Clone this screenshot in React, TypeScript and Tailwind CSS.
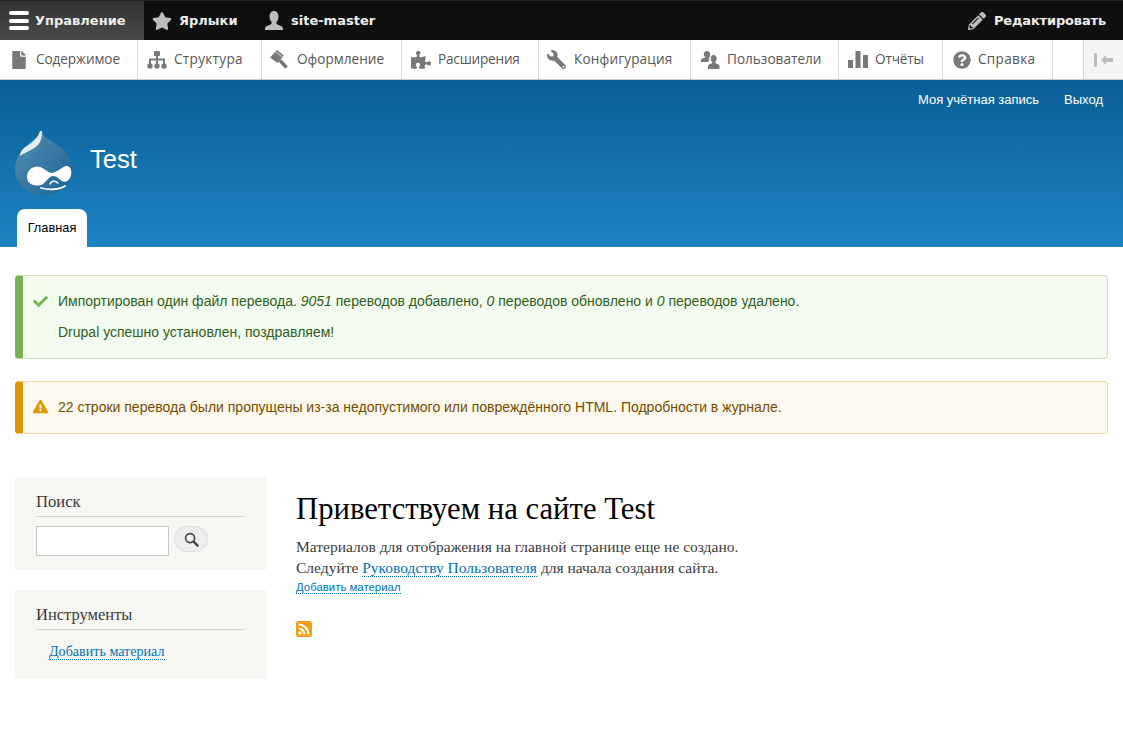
import React from "react";
import { FaStar, FaPencilAlt, FaFile, FaPuzzlePiece, FaWrench, FaQuestionCircle, FaCheck, FaExclamationTriangle } from "react-icons/fa";

const ic = "text-[#787878] shrink-0";

function Person() {
  return (
    <svg viewBox="0 0 18 19" className="w-[18px] h-[19px] shrink-0" fill="#bdbdbd">
      <path d="M9 0C12 0 13.500 2.500 13.500 5.500 13.500 8 12.500 10 11.500 11 11 12 11.500 13 12.500 13.500L16 15C17.500 15.600 18 16.500 18 18V19H0V18C0 16.500.5 15.600 2 15L5.500 13.500C6.500 13 7 12 6.500 11 5.500 10 4.500 8 4.500 5.500 4.500 2.500 6 0 9 0z" />
    </svg>
  );
}

function Tree() {
  return (
    <svg viewBox="0 0 20 18" className="w-5 h-[18px] shrink-0" fill="#787878">
      <rect x="7" y="0" width="6" height="5" rx="1" />
      <rect x="9" y="4" width="2" height="10" />
      <rect x="2" y="7.500" width="16" height="2" />
      <rect x="2" y="8" width="2" height="6" />
      <rect x="16" y="8" width="2" height="6" />
      <circle cx="3" cy="15" r="2.700" />
      <circle cx="10" cy="15" r="2.700" />
      <circle cx="17" cy="15" r="2.700" />
    </svg>
  );
}

function Hammer() {
  return (
    <svg viewBox="0 0 19 19" className="w-[19px] h-[19px] shrink-0" fill="#787878">
      <path d="M7 0L14 5.500 7.500 13 0 7.500z" />
      <path d="M5.500 1.500L12.500 7" stroke="#b5b5b5" strokeWidth="1.500" fill="none" />
      <path d="M10 10.500L16.500 17.500" stroke="#787878" strokeWidth="3.500" fill="none" />
    </svg>
  );
}

function Users() {
  return (
    <svg viewBox="0 0 20 20" className="w-5 h-5 shrink-0" fill="#787878">
      <path d="M7 1c2 0 3.200 1.600 3.200 3.600 0 1.500-.6 2.600-1.300 3.400-.3.500-.2 1 .3 1.300l.6.4c-1 .5-1.600 1.300-1.800 2.300H1v-2c0-.9.6-1.300 1.500-1.600l2.400-1c.5-.3.6-.8.3-1.200C4.500 7.200 3.800 6.100 3.800 4.600 3.800 2.600 5 1 7 1z" />
      <path d="M13.500 5c2 0 3.200 1.500 3.200 3.500 0 1.500-.6 2.600-1.300 3.400-.3.500-.2 1 .3 1.300l2.200 1c.9.300 1.600.8 1.600 1.700V19H8v-3.100c0-.9.7-1.400 1.600-1.700l2.200-1c.5-.3.6-.8.3-1.300-.7-.8-1.300-1.900-1.300-3.400C10.800 6.500 11.500 5 13.500 5z" />
    </svg>
  );
}

function Bars() {
  return (
    <svg viewBox="0 0 20 20" className="w-5 h-5 shrink-0" fill="#787878">
      <rect x="0" y="10" width="5" height="8" />
      <rect x="7.500" y="1" width="5" height="17" />
      <rect x="15" y="5" width="5" height="13" />
    </svg>
  );
}

function Collapse() {
  return (
    <svg viewBox="0 0 20 14" className="w-[20px] h-[14px]" fill="#bdbdbd">
      <rect x="0" y="0" width="3" height="14" />
      <path d="M7 7l5-5v3h7v4h-7v3z" />
    </svg>
  );
}

function Rss() {
  return (
    <svg viewBox="0 0 16 16" className="w-4 h-4 block">
      <rect width="16" height="16" rx="2.500" fill="#f89c12" />
      <circle cx="4" cy="12" r="1.700" fill="#fff" />
      <path d="M2.500 7.500a6 6 0 0 1 6 6" stroke="#fff" strokeWidth="2" fill="none" />
      <path d="M2.500 3.500a10 10 0 0 1 10 10" stroke="#fff" strokeWidth="2" fill="none" />
    </svg>
  );
}

function Lens() {
  return (
    <svg viewBox="0 0 16 16" className="w-[15px] h-[15px]" fill="none">
      <circle cx="6.500" cy="6.500" r="4.800" stroke="#444" strokeWidth="1.700" />
      <path d="M10.300 10.300L14.500 14.500" stroke="#444" strokeWidth="2.600" strokeLinecap="round" />
    </svg>
  );
}

function Drop() {
  return (
    <svg viewBox="0 0 58 64" className="w-[58px] h-[64px] block">
      <defs>
        <linearGradient id="dg" x1="0" y1="0" x2="1" y2="1">
          <stop offset="0.15" stopColor="#4f88ae" />
          <stop offset="0.8" stopColor="#266c9b" />
        </linearGradient>
      </defs>
      <path d="M25 0H27C28 7 36 9 43 14 52 20 58 29 58 38 58 53 45 64 29 64 13 64 0 53 0 38 0 25 10 15 17 10 21 7 24 5 25 0z" fill="url(#dg)" />
      <path d="M25 0H27C27 7 26 11 22 15 18 19 12 20 5 25 5 22 6 20 9 17 15 13 23 8 25 0z" fill="#e3edf4" />
      <path d="M12 46C12 38 20 34 25 36 29 37 32 41 36 42 41 42 47 36 51 35 56 35 57 40 56 44 55 50 50 52 47 50 44 48 42 45 38 45 34 45 33 49 28 53 24 56 12 55 12 46z" fill="#fff" />
      <path d="M26 57C33 59 44 59 50 55" fill="none" stroke="#fff" strokeWidth="1.800" strokeLinecap="round" />
      <path d="M35 53C36 50 40 49 43 52" fill="none" stroke="#fff" strokeWidth="1.500" strokeLinecap="round" />
    </svg>
  );
}

export default function App() {
  return (
    <div className="min-h-[750px] bg-white font-['Liberation_Sans',sans-serif]">
      <div className="h-10 flex items-stretch justify-between bg-[#0f0f0f] border-t border-[#222] font-['DejaVu_Sans',sans-serif] text-[13px] font-bold text-[#eeeeee]">
        <div className="flex items-stretch">
          <div className="w-[144px] flex items-center pl-[9px] gap-[6px] bg-gradient-to-b from-[#333333] to-[#4a4a4a]">
            <div className="w-5 flex flex-col gap-[3.500px]">
              <div className="h-1 rounded-sm bg-white" />
              <div className="h-1 rounded-sm bg-white" />
              <div className="h-1 rounded-sm bg-white" />
            </div>
            <span>Управление</span>
          </div>
          <div className="w-[108px] flex items-center pl-[8px] gap-[7px]">
            <FaStar className="text-[#bdbdbd] text-[20px]" />
            <span>Ярлыки</span>
          </div>
          <div className="flex items-center pl-[13px] gap-[8px]">
            <Person />
            <span>site-master</span>
          </div>
        </div>
        <div className="flex items-center pr-[17px] gap-[8px]">
          <FaPencilAlt className="text-[#bdbdbd] text-[18px]" />
          <span className="tracking-[-0.15px]">Редактировать</span>
        </div>
      </div>

      <div className="h-10 flex items-stretch bg-white border-b border-[#c9c9c9] font-['Open_Sans',sans-serif] text-[13.600px] text-[#565656]">
        <div className="w-[138px] flex items-center pl-[12px] gap-[10px] border-r border-[#d9d9d9]"><FaFile className={ic + " text-[18px] w-[14px]"} /><span className="tracking-[-0.1px]">Содержимое</span></div>
        <div className="w-[124px] flex items-center pl-[9px] gap-[7px] border-r border-[#d9d9d9]"><Tree /><span className="tracking-[0.3px]">Структура</span></div>
        <div className="w-[140px] flex items-center pl-[8px] gap-[8px] border-r border-[#d9d9d9]"><Hammer /><span>Оформление</span></div>
        <div className="w-[137px] flex items-center pl-[9px] gap-[7px] border-r border-[#d9d9d9]"><FaPuzzlePiece className={ic + " text-[20px]"} /><span className="tracking-[-0.2px]">Расширения</span></div>
        <div className="w-[152px] flex items-center pl-[8px] gap-[8px] border-r border-[#d9d9d9]"><FaWrench className={ic + " text-[19px] scale-x-[-1]"} /><span className="tracking-[0.15px]">Конфигурация</span></div>
        <div className="w-[148px] flex items-center pl-[9px] gap-[7px] border-r border-[#d9d9d9]"><Users /><span>Пользователи</span></div>
        <div className="w-[104px] flex items-center pl-[9px] gap-[7px] border-r border-[#d9d9d9]"><Bars /><span className="tracking-[-0.15px]">Отчёты</span></div>
        <div className="w-[110px] flex items-center pl-[10px] gap-[7px] border-r border-[#d9d9d9]"><FaQuestionCircle className={ic + " text-[18px]"} /><span className="tracking-[0.3px]">Справка</span></div>
        <div className="w-[30px]" />
        <div className="flex-1 flex items-center justify-center bg-[#f5f5f5] border-l border-[#d9d9d9]"><Collapse /></div>
      </div>

      <div className="h-[167px] bg-gradient-to-b from-[#0a5f96] to-[#1d84c3] px-[15px] flex flex-col text-white">
        <div className="h-[40px] flex justify-end items-center gap-[25px] pr-[5px] text-[13px]">
          <span>Моя учётная запись</span>
          <span>Выход</span>
        </div>
        <div className="h-[89px] flex items-start">
          <div className="mt-[11px]"><Drop /></div>
          <div className="ml-[17px] mt-[24px] text-[25.600px] leading-[30px]">Test</div>
        </div>
        <div className="flex-1 flex items-end pl-[2px]">
          <div className="h-[38px] w-[70px] bg-white rounded-t-[8px] text-black text-[12.800px] flex items-center justify-center">Главная</div>
        </div>
      </div>

      <div className="px-[15px] pt-[28px] text-[14px]">
        <div className="h-[84px] rounded-[4px] border border-[#c9e1bd] border-l-[8px] border-l-[#77b259] bg-[#f3faef] text-[#325e1c] pl-[35px] pt-[15px] relative leading-[21px]">
          <FaCheck className="absolute left-[10px] top-[18px] text-[#77b259] text-[15px]" />
          <p>Импортирован один файл перевода. <em>9051</em> переводов добавлено, <em>0</em> переводов обновлено и <em>0</em> переводов удалено.</p>
          <p className="mt-[10px]">Drupal успешно установлен, поздравляем!</p>
        </div>
        <div className="mt-[22px] h-[53px] rounded-[4px] border border-[#f4daa6] border-l-[8px] border-l-[#e09600] bg-[#fdf8ed] text-[#734c00] pl-[35px] pt-[15px] relative leading-[21px]">
          <FaExclamationTriangle className="absolute left-[10px] top-[17px] text-[#e09600] text-[15px]" />
          <p>22 строки перевода были пропущены из-за недопустимого или повреждённого HTML. Подробности в журнале.</p>
        </div>
      </div>

      <div className="flex px-[15px] mt-[43px] font-['Liberation_Serif',serif] text-[#3b3b3b]">
        <aside className="w-[251px] shrink-0 flex flex-col gap-[20px]">
          <div className="h-[93px] bg-[#f6f6f2] px-[21px] pt-[15px]">
            <h2 className="text-[16.600px] leading-[20px] pb-[4px] border-b border-[#d6d6d6]">Поиск</h2>
            <div className="flex items-start gap-[5px] mt-[9px]">
              <div className="w-[133px] h-[30px] bg-white border border-[#c8c8c8]" />
              <div className="w-[34px] h-[26px] rounded-[13px] bg-[#eeeeee] border border-[#dcdcdc] flex items-center justify-center">
                <Lens />
              </div>
            </div>
          </div>
          <div className="h-[89px] bg-[#f6f6f2] px-[21px] pt-[15px]">
            <h2 className="text-[16.500px] leading-[20px] pb-[4px] border-b border-[#d6d6d6]">Инструменты</h2>
            <div className="pl-[13px] mt-[12px] text-[14.100px] leading-[18px]">
              <span className="text-[#0071b3] border-b border-dotted border-[#0071b3]">Добавить материал</span>
            </div>
          </div>
        </aside>
        <main className="ml-[30px] flex-1">
          <h1 className="text-[30.700px] leading-[36px] text-black mt-[14px]">Приветствуем на сайте Test</h1>
          <p className="text-[15.500px] leading-[21px] mt-[9px]">Материалов для отображения на главной странице еще не создано.</p>
          <p className="text-[15.500px] leading-[21px]">Следуйте <span className="text-[#0071b3] border-b border-dotted border-[#0071b3]">Руководству Пользователя</span> для начала создания сайта.</p>
          <div className="font-['Liberation_Sans',sans-serif] text-[11.400px] leading-[13px] mt-[3px]"><span className="text-[#0071b3] border-b border-dotted border-[#0071b3]">Добавить материал</span></div>
          <div className="mt-[27px]"><Rss /></div>
        </main>
      </div>
    </div>
  );
}
